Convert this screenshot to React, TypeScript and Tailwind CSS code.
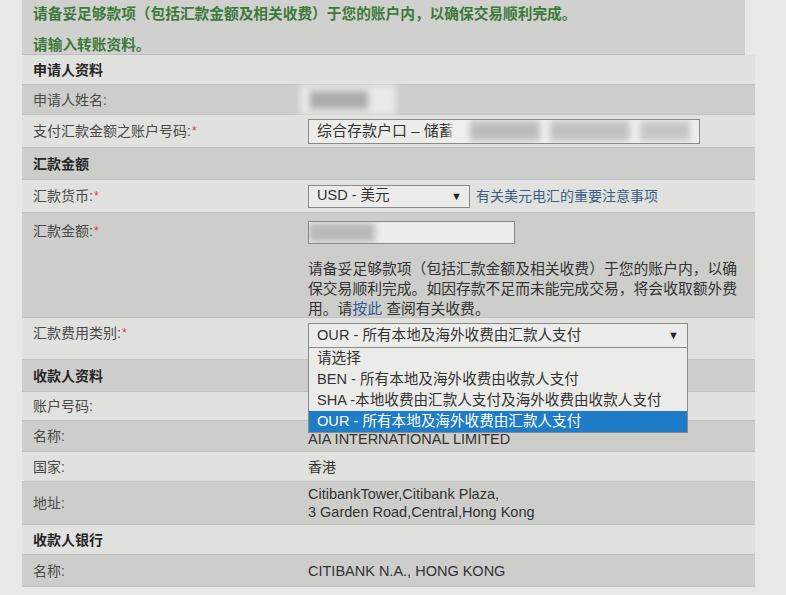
import React from "react";

const FONT = { fontFamily: '"Liberation Sans", "Noto Sans CJK SC", sans-serif' };

function Req() {
  return <span className="text-[#d23c3c] text-[12px] align-top ml-[1px]">*</span>;
}

function Row({
  dark,
  h,
  label,
  header,
  req,
  top,
  pt,
  children,
}: {
  dark?: boolean;
  h: string;
  label: string;
  header?: boolean;
  req?: boolean;
  top?: boolean;
  pt?: string;
  children?: React.ReactNode;
}) {
  return (
    <div
      className={`flex ${h} ${top ? "items-start" : "items-center"} ${pt ?? ""} border-b border-[#c2c2c0] ${
        dark ? "bg-[#cdcdcb]" : "bg-[#e1e1df]"
      }`}
    >
      <div
        className={`w-[286px] shrink-0 pl-[11px] leading-[20px] text-[14px] ${
          header ? "font-bold text-[#262626]" : "text-[#4a4a4a]"
        }`}
      >
        {label}
        {!header && ":"}
        {req && <Req />}
      </div>
      <div className="flex-1 min-w-0 text-[#333] relative">{children}</div>
    </div>
  );
}

function Tri() {
  return <span className="text-[11px] text-[#222] leading-none">▼</span>;
}

export default function App() {
  return (
    <div className="w-[786px] h-[595px] overflow-hidden bg-[#e8e8e6]" style={FONT}>
      {/* notice */}
      <div className="ml-[22px] w-[723px] h-[55px] bg-[#d0d0ce] border-b border-[#bdbdbb] pl-[11px] pt-[4px] text-[14.7px] font-bold text-[#3d7a3a] leading-[20px]">
        <p>请备妥足够款项（包括汇款金额及相关收费）于您的账户内，以确保交易顺利完成。</p>
        <p className="mt-[11px]">请输入转账资料。</p>
      </div>

      <div className="ml-[22px] w-[733px]">
        <Row h="h-[30px]" label="申请人资料" header />
        <Row dark h="h-[30px]" label="申请人姓名">
          <div className="ml-[-8px] w-[96px] h-[30px] bg-[#e9e9e7] blur-[3px] flex items-center pl-[10px]">
            <div className="w-[58px] h-[18px] bg-[#acacaa]" />
          </div>
        </Row>
        <Row h="h-[33px]" label="支付汇款金额之账户号码" req>
          <div className="w-[392px] h-[25px] border border-[#8a8a88] bg-[#ececea] flex items-center pl-[8px] text-[15px] overflow-hidden">
            <span className="shrink-0">综合存款户口 – 储蓄</span>
            <div className="ml-[-4px] flex-1 h-[28px] bg-[#efefed] blur-[3px] flex items-center gap-[10px] pl-[20px]">
              <div className="w-[70px] h-[20px] bg-[#bdbdbb]" />
              <div className="w-[80px] h-[20px] bg-[#c2c2c0]" />
              <div className="w-[50px] h-[20px] bg-[#c6c6c4]" />
            </div>
          </div>
        </Row>
        <Row dark h="h-[32px]" label="汇款金额" header />
        <Row h="h-[33px]" label="汇款货币" req>
          <div className="flex items-center">
            <div className="w-[162px] h-[23px] border border-[#8a8a88] bg-[#ececea] flex items-center justify-between pl-[8px] pr-[7px] text-[14.5px]">
              <span>USD - 美元</span>
              <Tri />
            </div>
            <a className="ml-[6px] text-[14px] text-[#3a5f86]">有关美元电汇的重要注意事项</a>
          </div>
        </Row>
        <Row dark h="h-[105px]" label="汇款金额" req top pt="pt-[8px]">
          <div className="w-[207px] h-[23px] border border-[#8a8a88] bg-[#ececea] overflow-hidden">
            <div className="w-[66px] h-[19px] mt-[1px] bg-[#b9b9b7] blur-[3px]" />
          </div>
          <p className="mt-[15px] text-[14.8px] leading-[20px] text-[#333] whitespace-nowrap">
            请备妥足够款项（包括汇款金额及相关收费）于您的账户内，以确
            <br />
            保交易顺利完成。如因存款不足而未能完成交易，将会收取额外费
            <br />
            用。请<span className="text-[#2f5f92]">按此</span> 查阅有关收费。
          </p>
        </Row>
        <Row h="h-[42px]" label="汇款费用类别" req top pt="pt-[5px]">
          <div className="w-[380px] h-[25px] border border-[#8a8a88] bg-[#ececea] flex items-center justify-between pl-[8px] pr-[8px] text-[14.6px]">
            <span>OUR - 所有本地及海外收费由汇款人支付</span>
            <Tri />
          </div>
          <div className="absolute left-0 top-[25px] z-10 w-[380px] border border-t-0 border-[#8a8a88] bg-[#ebebe9] text-[14.6px] leading-[21px]">
            <div className="px-[8px] h-[21px]">请选择</div>
            <div className="px-[8px] h-[21px]">BEN - 所有本地及海外收费由收款人支付</div>
            <div className="px-[8px] h-[21px]">SHA -本地收费由汇款人支付及海外收费由收款人支付</div>
            <div className="px-[8px] h-[21px] bg-[#1f7cc6] text-white">OUR - 所有本地及海外收费由汇款人支付</div>
          </div>
        </Row>
        <Row dark h="h-[32px]" label="收款人资料" header />
        <Row h="h-[29px]" label="账户号码" />
        <Row dark h="h-[31px]" label="名称">
          <span className="text-[14.5px] relative top-[3px]">AIA INTERNATIONAL LIMITED</span>
        </Row>
        <Row h="h-[30px]" label="国家">
          <span className="text-[14px]">香港</span>
        </Row>
        <Row dark h="h-[43px]" label="地址">
          <div className="text-[14.5px] leading-[18px]">
            <div>CitibankTower,Citibank Plaza,</div>
            <div>3 Garden Road,Central,Hong Kong</div>
          </div>
        </Row>
        <Row h="h-[30px]" label="收款人银行" header />
        <Row dark h="h-[32px]" label="名称">
          <span className="text-[14.5px]">CITIBANK N.A., HONG KONG</span>
        </Row>
      </div>
    </div>
  );
}
